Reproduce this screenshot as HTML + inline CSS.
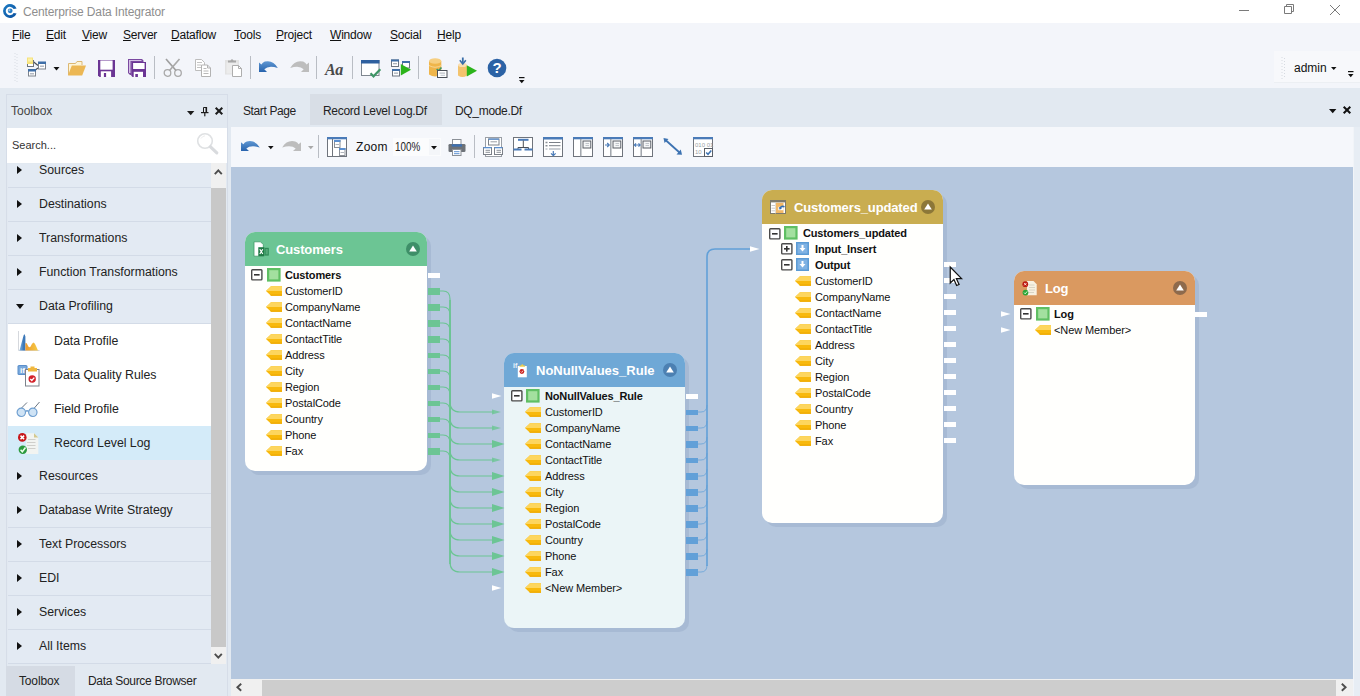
<!DOCTYPE html>
<html>
<head>
<meta charset="utf-8">
<title>Centerprise Data Integrator</title>
<style>
html,body{margin:0;padding:0;}
body{width:1360px;height:696px;overflow:hidden;position:relative;background:#e2e9f1;font-family:"Liberation Sans",sans-serif;font-size:12px;color:#1e1e1e;}
.abs{position:absolute;}
.t{position:absolute;white-space:nowrap;line-height:14px;}
#titlebar{left:0;top:0;width:1360px;height:23px;background:#fff;}
#menubar{left:0;top:23px;width:1360px;height:65px;background:#f3f5fa;}
.menu{top:28px;font-size:12px;color:#111;letter-spacing:-0.2px;}
.menu u{text-decoration:underline;text-underline-offset:1px;}
#toolboxpanel{left:6px;top:94px;width:220px;height:602px;border:1px solid #d6dde8;border-bottom:none;box-sizing:content-box;}
#search{left:7px;top:128px;width:220px;height:35px;background:#fff;}
#tlist{left:8px;top:164px;width:203px;height:500px;background:#e3eaf3;overflow:hidden;}
.cat{position:absolute;left:0;width:203px;height:33px;border-bottom:1px solid #d3dbe7;font-size:12.3px;color:#222;}
.cat span{position:absolute;left:31px;top:9px;line-height:14px;white-space:nowrap;}
.cat i{position:absolute;left:9px;top:12px;width:0;height:0;border-left:5.5px solid #111;border-top:4px solid transparent;border-bottom:4px solid transparent;}
.cat i.open{left:8px;top:14px;border-left:4px solid transparent;border-right:4px solid transparent;border-top:5px solid #111;border-bottom:none;}
.item{position:absolute;left:0;width:203px;height:34px;background:#fff;font-size:12.3px;color:#222;}
.item span{position:absolute;left:46px;top:10px;line-height:14px;white-space:nowrap;}
.item.sel{background:#d4ebf9;}
#vscroll{left:211px;top:163px;width:15px;height:501px;background:#f0f0f0;}
#vthumb{left:211px;top:188px;width:15px;height:459px;background:#c8c8c8;}
#canvas{left:231px;top:167px;width:1122px;height:512px;background:#b5c7de;overflow:hidden;}
#doctb{left:231px;top:127px;width:1122px;height:40px;background:#f5f7fb;}
#hscroll{left:231px;top:679px;width:1122px;height:17px;background:#f0f0f0;}
#hthumb{left:262px;top:680px;width:1074px;height:16px;background:#cdcdcd;}

.node{position:absolute;border-radius:10px;overflow:hidden;box-shadow:4px 4px 0 rgba(125,145,180,0.24);}
.nhdr{position:absolute;left:0;top:0;right:0;height:34px;}
.ntitle{font-size:13px;font-weight:bold;color:#fff;line-height:15px;letter-spacing:-0.13px;}
.f{font-size:11px;line-height:12px;color:#111;letter-spacing:-0.1px;}
.b{font-weight:bold;letter-spacing:-0.15px;}
svg.abs{display:block;overflow:visible;}
.sep{width:1px;background:#b9bdc4;}
</style>
</head>
<body>
<div id="titlebar" class="abs"></div>
<div class="t" style="left:23px;top:5px;font-size:12px;color:#8e8e8e;letter-spacing:-0.13px;">Centerprise Data Integrator</div>
<div id="menubar" class="abs"></div>
<div class="t menu" style="left:12px;"><u>F</u>ile</div>
<div class="t menu" style="left:46px;"><u>E</u>dit</div>
<div class="t menu" style="left:82px;"><u>V</u>iew</div>
<div class="t menu" style="left:123px;"><u>S</u>erver</div>
<div class="t menu" style="left:171px;"><u>D</u>ataflow</div>
<div class="t menu" style="left:234px;"><u>T</u>ools</div>
<div class="t menu" style="left:276px;"><u>P</u>roject</div>
<div class="t menu" style="left:330px;"><u>W</u>indow</div>
<div class="t menu" style="left:390px;"><u>S</u>ocial</div>
<div class="t menu" style="left:437px;"><u>H</u>elp</div>
<div class="abs" style="left:1274px;top:51px;width:86px;height:31px;background:#f7f8fb;border-bottom:1px solid #eceff3;"></div>
<div class="t" style="left:1294px;top:61px;font-size:12px;color:#111;">admin</div>

<!-- TOOLBOX -->
<div id="toolboxpanel" class="abs"></div>
<div class="t" style="left:11px;top:104px;color:#444;">Toolbox</div>
<div id="search" class="abs"></div>
<div class="t" style="left:12px;top:138px;font-size:11px;color:#333;">Search...</div>
<div id="tlist" class="abs">
  <div class="cat" style="top:-10px;"><i></i><span>Sources</span></div>
  <div class="cat" style="top:24px;"><i></i><span>Destinations</span></div>
  <div class="cat" style="top:58px;"><i></i><span>Transformations</span></div>
  <div class="cat" style="top:92px;"><i></i><span>Function Transformations</span></div>
  <div class="cat" style="top:126px;"><i class="open"></i><span>Data Profiling</span></div>
  <div class="item" style="top:160px;"><span>Data Profile</span></div>
  <div class="item" style="top:194px;"><span>Data Quality Rules</span></div>
  <div class="item" style="top:228px;"><span>Field Profile</span></div>
  <div class="item sel" style="top:262px;"><span>Record Level Log</span></div>
  <div class="cat" style="top:296px;"><i></i><span>Resources</span></div>
  <div class="cat" style="top:330px;"><i></i><span>Database Write Strategy</span></div>
  <div class="cat" style="top:364px;"><i></i><span>Text Processors</span></div>
  <div class="cat" style="top:398px;"><i></i><span>EDI</span></div>
  <div class="cat" style="top:432px;"><i></i><span>Services</span></div>
  <div class="cat" style="top:466px;"><i></i><span>All Items</span></div>
</div>
<div id="vscroll" class="abs"></div>
<div id="vthumb" class="abs"></div>
<div class="abs" style="left:6px;top:666px;width:69px;height:30px;background:#d5dbe4;"></div>
<div class="t" style="left:19px;top:674px;color:#222;letter-spacing:-0.15px;">Toolbox</div>
<div class="t" style="left:88px;top:674px;color:#222;letter-spacing:-0.3px;">Data Source Browser</div>

<!-- DOC TABS -->
<div class="abs" style="left:310px;top:94px;width:132px;height:31px;background:#d8dee6;"></div>
<div class="t" style="left:243px;top:104px;color:#222;letter-spacing:-0.38px;">Start Page</div>
<div class="t" style="left:323px;top:104px;color:#222;letter-spacing:-0.3px;">Record Level Log.Df</div>
<div class="t" style="left:455px;top:104px;color:#222;letter-spacing:-0.32px;">DQ_mode.Df</div>
<div id="doctb" class="abs"></div>
<div id="canvas" class="abs"></div>
<div id="hscroll" class="abs"></div>
<div class="abs" style="left:1353px;top:127px;width:7px;height:569px;background:#e7edf4;border-left:1px solid #f1f4f8;box-sizing:border-box;"></div>
<div id="hthumb" class="abs"></div>
<svg class="abs" style="left:0;top:0" width="1360" height="696" viewBox="0 0 1360 696" fill="none"><path d="M440 291 H443 Q450 291 450 299 V402 Q450 412 460 412 H494" stroke="#6cc594" stroke-width="1.2"/><path d="M440 307 H443 Q450 307 450 315 V418 Q450 428 460 428 H494" stroke="#6cc594" stroke-width="1.2"/><path d="M440 323 H443 Q450 323 450 331 V434 Q450 444 460 444 H494" stroke="#6cc594" stroke-width="1.2"/><path d="M440 339 H443 Q450 339 450 347 V450 Q450 460 460 460 H494" stroke="#6cc594" stroke-width="1.2"/><path d="M440 355 H443 Q450 355 450 363 V466 Q450 476 460 476 H494" stroke="#6cc594" stroke-width="1.2"/><path d="M440 371 H443 Q450 371 450 379 V482 Q450 492 460 492 H494" stroke="#6cc594" stroke-width="1.2"/><path d="M440 387 H443 Q450 387 450 395 V498 Q450 508 460 508 H494" stroke="#6cc594" stroke-width="1.2"/><path d="M440 403 H443 Q450 403 450 411 V514 Q450 524 460 524 H494" stroke="#6cc594" stroke-width="1.2"/><path d="M440 419 H443 Q450 419 450 427 V530 Q450 540 460 540 H494" stroke="#6cc594" stroke-width="1.2"/><path d="M440 435 H443 Q450 435 450 443 V546 Q450 556 460 556 H494" stroke="#6cc594" stroke-width="1.2"/><path d="M440 451 H443 Q450 451 450 459 V562 Q450 572 460 572 H494" stroke="#6cc594" stroke-width="1.2"/><path d="M697 412 H701 Q707 412 707 405" stroke="#62a0d8" stroke-width="1" opacity="0.75"/><path d="M697 428 H701 Q707 428 707 421" stroke="#62a0d8" stroke-width="1" opacity="0.75"/><path d="M697 444 H701 Q707 444 707 437" stroke="#62a0d8" stroke-width="1" opacity="0.75"/><path d="M697 460 H701 Q707 460 707 453" stroke="#62a0d8" stroke-width="1" opacity="0.75"/><path d="M697 476 H701 Q707 476 707 469" stroke="#62a0d8" stroke-width="1" opacity="0.75"/><path d="M697 492 H701 Q707 492 707 485" stroke="#62a0d8" stroke-width="1" opacity="0.75"/><path d="M697 508 H701 Q707 508 707 501" stroke="#62a0d8" stroke-width="1" opacity="0.75"/><path d="M697 524 H701 Q707 524 707 517" stroke="#62a0d8" stroke-width="1" opacity="0.75"/><path d="M697 540 H701 Q707 540 707 533" stroke="#62a0d8" stroke-width="1" opacity="0.75"/><path d="M697 556 H701 Q707 556 707 549" stroke="#62a0d8" stroke-width="1" opacity="0.75"/><path d="M697 572 H701 Q707 572 707 565" stroke="#62a0d8" stroke-width="1" opacity="0.75"/><path d="M450 300 V564" stroke="#6cc594" stroke-width="1.6"/><path d="M707 566 V257 Q707 249 715 249 H751" stroke="#62a0d8" stroke-width="1.6"/></svg>
<div class="node" style="left:245px;top:232px;width:182px;height:239px;background:#fffffd;"><div class="nhdr" style="background:#6cc594;"></div></div><div class="t ntitle" style="left:276px;top:242px;">Customers</div><svg class="abs" style="left:406px;top:242px" width="14" height="14" viewBox="0 0 14 14"><circle cx="7" cy="7" r="7" fill="#3e8f68"/><path d="M3.2 9.6 L7 3.6 L10.8 9.6 Z" fill="#fff"/></svg>
<svg class="abs" style="left:251px;top:269px" width="12" height="12" viewBox="0 0 12 12"><rect x="0.7" y="0.7" width="10.2" height="10.2" rx="0.8" fill="#fff" stroke="#4a4a4a" stroke-width="1.4"/><rect x="3" y="5" width="5.6" height="1.6" fill="#333"/></svg>
<svg class="abs" style="left:267px;top:268px" width="14" height="14" viewBox="0 0 14 14"><rect x="0" y="0" width="13.6" height="13.6" fill="#5fbf63"/><rect x="2.2" y="2.2" width="9.2" height="9.2" fill="#a3e09f"/></svg>
<div class="t f b" style="left:285px;top:269px;">Customers</div>
<svg class="abs" style="left:266px;top:286px" width="16" height="10" viewBox="0 0 16 10"><path d="M0 5 L5 0.3 H16 V9.7 H5 Z" fill="#f8b90d"/><path d="M0 5 L5 0.3 H16 V5 Z" fill="#fdd65e"/><path d="M4 8.4 H16 V9.7 H5 Z" fill="#eea900"/></svg>
<div class="t f" style="left:285px;top:285px;">CustomerID</div>
<svg class="abs" style="left:266px;top:302px" width="16" height="10" viewBox="0 0 16 10"><path d="M0 5 L5 0.3 H16 V9.7 H5 Z" fill="#f8b90d"/><path d="M0 5 L5 0.3 H16 V5 Z" fill="#fdd65e"/><path d="M4 8.4 H16 V9.7 H5 Z" fill="#eea900"/></svg>
<div class="t f" style="left:285px;top:301px;">CompanyName</div>
<svg class="abs" style="left:266px;top:318px" width="16" height="10" viewBox="0 0 16 10"><path d="M0 5 L5 0.3 H16 V9.7 H5 Z" fill="#f8b90d"/><path d="M0 5 L5 0.3 H16 V5 Z" fill="#fdd65e"/><path d="M4 8.4 H16 V9.7 H5 Z" fill="#eea900"/></svg>
<div class="t f" style="left:285px;top:317px;">ContactName</div>
<svg class="abs" style="left:266px;top:334px" width="16" height="10" viewBox="0 0 16 10"><path d="M0 5 L5 0.3 H16 V9.7 H5 Z" fill="#f8b90d"/><path d="M0 5 L5 0.3 H16 V5 Z" fill="#fdd65e"/><path d="M4 8.4 H16 V9.7 H5 Z" fill="#eea900"/></svg>
<div class="t f" style="left:285px;top:333px;">ContactTitle</div>
<svg class="abs" style="left:266px;top:350px" width="16" height="10" viewBox="0 0 16 10"><path d="M0 5 L5 0.3 H16 V9.7 H5 Z" fill="#f8b90d"/><path d="M0 5 L5 0.3 H16 V5 Z" fill="#fdd65e"/><path d="M4 8.4 H16 V9.7 H5 Z" fill="#eea900"/></svg>
<div class="t f" style="left:285px;top:349px;">Address</div>
<svg class="abs" style="left:266px;top:366px" width="16" height="10" viewBox="0 0 16 10"><path d="M0 5 L5 0.3 H16 V9.7 H5 Z" fill="#f8b90d"/><path d="M0 5 L5 0.3 H16 V5 Z" fill="#fdd65e"/><path d="M4 8.4 H16 V9.7 H5 Z" fill="#eea900"/></svg>
<div class="t f" style="left:285px;top:365px;">City</div>
<svg class="abs" style="left:266px;top:382px" width="16" height="10" viewBox="0 0 16 10"><path d="M0 5 L5 0.3 H16 V9.7 H5 Z" fill="#f8b90d"/><path d="M0 5 L5 0.3 H16 V5 Z" fill="#fdd65e"/><path d="M4 8.4 H16 V9.7 H5 Z" fill="#eea900"/></svg>
<div class="t f" style="left:285px;top:381px;">Region</div>
<svg class="abs" style="left:266px;top:398px" width="16" height="10" viewBox="0 0 16 10"><path d="M0 5 L5 0.3 H16 V9.7 H5 Z" fill="#f8b90d"/><path d="M0 5 L5 0.3 H16 V5 Z" fill="#fdd65e"/><path d="M4 8.4 H16 V9.7 H5 Z" fill="#eea900"/></svg>
<div class="t f" style="left:285px;top:397px;">PostalCode</div>
<svg class="abs" style="left:266px;top:414px" width="16" height="10" viewBox="0 0 16 10"><path d="M0 5 L5 0.3 H16 V9.7 H5 Z" fill="#f8b90d"/><path d="M0 5 L5 0.3 H16 V5 Z" fill="#fdd65e"/><path d="M4 8.4 H16 V9.7 H5 Z" fill="#eea900"/></svg>
<div class="t f" style="left:285px;top:413px;">Country</div>
<svg class="abs" style="left:266px;top:430px" width="16" height="10" viewBox="0 0 16 10"><path d="M0 5 L5 0.3 H16 V9.7 H5 Z" fill="#f8b90d"/><path d="M0 5 L5 0.3 H16 V5 Z" fill="#fdd65e"/><path d="M4 8.4 H16 V9.7 H5 Z" fill="#eea900"/></svg>
<div class="t f" style="left:285px;top:429px;">Phone</div>
<svg class="abs" style="left:266px;top:446px" width="16" height="10" viewBox="0 0 16 10"><path d="M0 5 L5 0.3 H16 V9.7 H5 Z" fill="#f8b90d"/><path d="M0 5 L5 0.3 H16 V5 Z" fill="#fdd65e"/><path d="M4 8.4 H16 V9.7 H5 Z" fill="#eea900"/></svg>
<div class="t f" style="left:285px;top:445px;">Fax</div>
<div class="abs" style="left:428px;top:272.5px;width:12px;height:5px;background:#ffffff;"></div>
<div class="abs" style="left:428px;top:287.5px;width:12px;height:7px;background:#6cc594;"></div>
<div class="abs" style="left:428px;top:303.5px;width:12px;height:7px;background:#6cc594;"></div>
<div class="abs" style="left:428px;top:319.5px;width:12px;height:7px;background:#6cc594;"></div>
<div class="abs" style="left:428px;top:335.5px;width:12px;height:7px;background:#6cc594;"></div>
<div class="abs" style="left:428px;top:352.5px;width:12px;height:5px;background:#6cc594;"></div>
<div class="abs" style="left:428px;top:368.5px;width:12px;height:5px;background:#6cc594;"></div>
<div class="abs" style="left:428px;top:384.5px;width:12px;height:5px;background:#6cc594;"></div>
<div class="abs" style="left:428px;top:400.5px;width:12px;height:5px;background:#6cc594;"></div>
<div class="abs" style="left:428px;top:416.5px;width:12px;height:5px;background:#6cc594;"></div>
<div class="abs" style="left:428px;top:432.5px;width:12px;height:5px;background:#6cc594;"></div>
<div class="abs" style="left:428px;top:447.5px;width:12px;height:7px;background:#6cc594;"></div>
<div class="node" style="left:504px;top:353px;width:181px;height:275px;background:#ebf5f7;"><div class="nhdr" style="background:#6fa8d6;"></div></div><div class="t ntitle" style="left:536px;top:363px;letter-spacing:0;">NoNullValues_Rule</div><svg class="abs" style="left:663px;top:363px" width="14" height="14" viewBox="0 0 14 14"><circle cx="7" cy="7" r="7" fill="#4c80b2"/><path d="M3.2 9.6 L7 3.6 L10.8 9.6 Z" fill="#fff"/></svg>
<svg class="abs" style="left:511px;top:390px" width="12" height="12" viewBox="0 0 12 12"><rect x="0.7" y="0.7" width="10.2" height="10.2" rx="0.8" fill="#fff" stroke="#4a4a4a" stroke-width="1.4"/><rect x="3" y="5" width="5.6" height="1.6" fill="#333"/></svg>
<svg class="abs" style="left:526px;top:389px" width="14" height="14" viewBox="0 0 14 14"><rect x="0" y="0" width="13.6" height="13.6" fill="#5fbf63"/><rect x="2.2" y="2.2" width="9.2" height="9.2" fill="#a3e09f"/></svg>
<div class="t f b" style="left:545px;top:390px;">NoNullValues_Rule</div>
<svg class="abs" style="left:525px;top:407px" width="16" height="10" viewBox="0 0 16 10"><path d="M0 5 L5 0.3 H16 V9.7 H5 Z" fill="#f8b90d"/><path d="M0 5 L5 0.3 H16 V5 Z" fill="#fdd65e"/><path d="M4 8.4 H16 V9.7 H5 Z" fill="#eea900"/></svg>
<div class="t f" style="left:545px;top:406px;">CustomerID</div>
<svg class="abs" style="left:525px;top:423px" width="16" height="10" viewBox="0 0 16 10"><path d="M0 5 L5 0.3 H16 V9.7 H5 Z" fill="#f8b90d"/><path d="M0 5 L5 0.3 H16 V5 Z" fill="#fdd65e"/><path d="M4 8.4 H16 V9.7 H5 Z" fill="#eea900"/></svg>
<div class="t f" style="left:545px;top:422px;">CompanyName</div>
<svg class="abs" style="left:525px;top:439px" width="16" height="10" viewBox="0 0 16 10"><path d="M0 5 L5 0.3 H16 V9.7 H5 Z" fill="#f8b90d"/><path d="M0 5 L5 0.3 H16 V5 Z" fill="#fdd65e"/><path d="M4 8.4 H16 V9.7 H5 Z" fill="#eea900"/></svg>
<div class="t f" style="left:545px;top:438px;">ContactName</div>
<svg class="abs" style="left:525px;top:455px" width="16" height="10" viewBox="0 0 16 10"><path d="M0 5 L5 0.3 H16 V9.7 H5 Z" fill="#f8b90d"/><path d="M0 5 L5 0.3 H16 V5 Z" fill="#fdd65e"/><path d="M4 8.4 H16 V9.7 H5 Z" fill="#eea900"/></svg>
<div class="t f" style="left:545px;top:454px;">ContactTitle</div>
<svg class="abs" style="left:525px;top:471px" width="16" height="10" viewBox="0 0 16 10"><path d="M0 5 L5 0.3 H16 V9.7 H5 Z" fill="#f8b90d"/><path d="M0 5 L5 0.3 H16 V5 Z" fill="#fdd65e"/><path d="M4 8.4 H16 V9.7 H5 Z" fill="#eea900"/></svg>
<div class="t f" style="left:545px;top:470px;">Address</div>
<svg class="abs" style="left:525px;top:487px" width="16" height="10" viewBox="0 0 16 10"><path d="M0 5 L5 0.3 H16 V9.7 H5 Z" fill="#f8b90d"/><path d="M0 5 L5 0.3 H16 V5 Z" fill="#fdd65e"/><path d="M4 8.4 H16 V9.7 H5 Z" fill="#eea900"/></svg>
<div class="t f" style="left:545px;top:486px;">City</div>
<svg class="abs" style="left:525px;top:503px" width="16" height="10" viewBox="0 0 16 10"><path d="M0 5 L5 0.3 H16 V9.7 H5 Z" fill="#f8b90d"/><path d="M0 5 L5 0.3 H16 V5 Z" fill="#fdd65e"/><path d="M4 8.4 H16 V9.7 H5 Z" fill="#eea900"/></svg>
<div class="t f" style="left:545px;top:502px;">Region</div>
<svg class="abs" style="left:525px;top:519px" width="16" height="10" viewBox="0 0 16 10"><path d="M0 5 L5 0.3 H16 V9.7 H5 Z" fill="#f8b90d"/><path d="M0 5 L5 0.3 H16 V5 Z" fill="#fdd65e"/><path d="M4 8.4 H16 V9.7 H5 Z" fill="#eea900"/></svg>
<div class="t f" style="left:545px;top:518px;">PostalCode</div>
<svg class="abs" style="left:525px;top:535px" width="16" height="10" viewBox="0 0 16 10"><path d="M0 5 L5 0.3 H16 V9.7 H5 Z" fill="#f8b90d"/><path d="M0 5 L5 0.3 H16 V5 Z" fill="#fdd65e"/><path d="M4 8.4 H16 V9.7 H5 Z" fill="#eea900"/></svg>
<div class="t f" style="left:545px;top:534px;">Country</div>
<svg class="abs" style="left:525px;top:551px" width="16" height="10" viewBox="0 0 16 10"><path d="M0 5 L5 0.3 H16 V9.7 H5 Z" fill="#f8b90d"/><path d="M0 5 L5 0.3 H16 V5 Z" fill="#fdd65e"/><path d="M4 8.4 H16 V9.7 H5 Z" fill="#eea900"/></svg>
<div class="t f" style="left:545px;top:550px;">Phone</div>
<svg class="abs" style="left:525px;top:567px" width="16" height="10" viewBox="0 0 16 10"><path d="M0 5 L5 0.3 H16 V9.7 H5 Z" fill="#f8b90d"/><path d="M0 5 L5 0.3 H16 V5 Z" fill="#fdd65e"/><path d="M4 8.4 H16 V9.7 H5 Z" fill="#eea900"/></svg>
<div class="t f" style="left:545px;top:566px;">Fax</div>
<svg class="abs" style="left:525px;top:583px" width="16" height="10" viewBox="0 0 16 10"><path d="M0 5 L5 0.3 H16 V9.7 H5 Z" fill="#f8b90d"/><path d="M0 5 L5 0.3 H16 V5 Z" fill="#fdd65e"/><path d="M4 8.4 H16 V9.7 H5 Z" fill="#eea900"/></svg>
<div class="t f" style="left:545px;top:582px;">&lt;New Member&gt;</div>
<svg class="abs" style="left:492px;top:391px" width="14" height="10" viewBox="0 0 14 10"><path d="M0 2.3 L9.5 5 L0 7.7 Z" fill="#ffffff" opacity="1"/></svg>
<svg class="abs" style="left:492px;top:407px" width="14" height="10" viewBox="0 0 14 10"><path d="M0 2.5 L9 5 L0 7.5 Z" fill="#6cc594" opacity="0.8"/></svg>
<svg class="abs" style="left:492px;top:423px" width="14" height="10" viewBox="0 0 14 10"><path d="M0 2.5 L9 5 L0 7.5 Z" fill="#6cc594" opacity="0.8"/></svg>
<svg class="abs" style="left:491.5px;top:439px" width="14" height="10" viewBox="0 0 14 10"><path d="M0 1 L12.5 5 L0 9 Z" fill="#6cc594" opacity="1"/></svg>
<svg class="abs" style="left:492px;top:455px" width="14" height="10" viewBox="0 0 14 10"><path d="M0 2.5 L9 5 L0 7.5 Z" fill="#6cc594" opacity="0.8"/></svg>
<svg class="abs" style="left:491.5px;top:471px" width="14" height="10" viewBox="0 0 14 10"><path d="M0 1 L12.5 5 L0 9 Z" fill="#6cc594" opacity="1"/></svg>
<svg class="abs" style="left:491.5px;top:487px" width="14" height="10" viewBox="0 0 14 10"><path d="M0 1 L12.5 5 L0 9 Z" fill="#6cc594" opacity="1"/></svg>
<svg class="abs" style="left:491.5px;top:503px" width="14" height="10" viewBox="0 0 14 10"><path d="M0 1 L12.5 5 L0 9 Z" fill="#6cc594" opacity="1"/></svg>
<svg class="abs" style="left:491.5px;top:519px" width="14" height="10" viewBox="0 0 14 10"><path d="M0 1 L12.5 5 L0 9 Z" fill="#6cc594" opacity="1"/></svg>
<svg class="abs" style="left:491.5px;top:535px" width="14" height="10" viewBox="0 0 14 10"><path d="M0 1 L12.5 5 L0 9 Z" fill="#6cc594" opacity="1"/></svg>
<svg class="abs" style="left:491.5px;top:551px" width="14" height="10" viewBox="0 0 14 10"><path d="M0 1 L12.5 5 L0 9 Z" fill="#6cc594" opacity="1"/></svg>
<svg class="abs" style="left:491.5px;top:567px" width="14" height="10" viewBox="0 0 14 10"><path d="M0 1 L12.5 5 L0 9 Z" fill="#6cc594" opacity="1"/></svg>
<svg class="abs" style="left:492px;top:583px" width="14" height="10" viewBox="0 0 14 10"><path d="M0 2.3 L9.5 5 L0 7.7 Z" fill="#ffffff" opacity="1"/></svg>
<div class="abs" style="left:686px;top:393.5px;width:12px;height:5px;background:#ffffff;"></div>
<div class="abs" style="left:686px;top:409.5px;width:12px;height:5px;background:#62a0d8;"></div>
<div class="abs" style="left:686px;top:425.5px;width:12px;height:5px;background:#62a0d8;"></div>
<div class="abs" style="left:686px;top:440.5px;width:12px;height:7px;background:#62a0d8;"></div>
<div class="abs" style="left:686px;top:457.5px;width:12px;height:5px;background:#62a0d8;"></div>
<div class="abs" style="left:686px;top:472.5px;width:12px;height:7px;background:#62a0d8;"></div>
<div class="abs" style="left:686px;top:488.5px;width:12px;height:7px;background:#62a0d8;"></div>
<div class="abs" style="left:686px;top:504.5px;width:12px;height:7px;background:#62a0d8;"></div>
<div class="abs" style="left:686px;top:520.5px;width:12px;height:7px;background:#62a0d8;"></div>
<div class="abs" style="left:686px;top:536.5px;width:12px;height:7px;background:#62a0d8;"></div>
<div class="abs" style="left:686px;top:552.5px;width:12px;height:7px;background:#62a0d8;"></div>
<div class="abs" style="left:686px;top:568.5px;width:12px;height:7px;background:#62a0d8;"></div>
<div class="node" style="left:762px;top:190px;width:181px;height:333px;background:#fffffd;"><div class="nhdr" style="background:#c9ad50;"></div></div><div class="t ntitle" style="left:794px;top:200px;">Customers_updated</div><svg class="abs" style="left:921px;top:200px" width="14" height="14" viewBox="0 0 14 14"><circle cx="7" cy="7" r="7" fill="#8c7738"/><path d="M3.2 9.6 L7 3.6 L10.8 9.6 Z" fill="#fff"/></svg>
<svg class="abs" style="left:769px;top:228px" width="12" height="12" viewBox="0 0 12 12"><rect x="0.7" y="0.7" width="10.2" height="10.2" rx="0.8" fill="#fff" stroke="#4a4a4a" stroke-width="1.4"/><rect x="3" y="5" width="5.6" height="1.6" fill="#333"/></svg>
<svg class="abs" style="left:784px;top:226px" width="14" height="14" viewBox="0 0 14 14"><rect x="0" y="0" width="13.6" height="13.6" fill="#5fbf63"/><rect x="2.2" y="2.2" width="9.2" height="9.2" fill="#a3e09f"/></svg>
<div class="t f b" style="left:803px;top:227px;">Customers_updated</div>
<svg class="abs" style="left:781px;top:243px" width="12" height="12" viewBox="0 0 12 12"><rect x="0.7" y="0.7" width="10.2" height="10.2" rx="0.8" fill="#fff" stroke="#4a4a4a" stroke-width="1.4"/><rect x="3" y="5" width="5.6" height="1.6" fill="#333"/><rect x="5" y="3" width="1.6" height="5.6" fill="#333"/></svg>
<svg class="abs" style="left:796px;top:242px" width="13" height="13" viewBox="0 0 13 13"><rect x="0" y="0" width="13" height="13" fill="#5b9bd5"/><rect x="1.5" y="1.5" width="10" height="10" fill="#7fb2e3"/><path d="M5.5 3 H7.5 V6 H9.5 L6.5 9.5 L3.5 6 H5.5 Z" fill="#fff"/></svg>
<div class="t f b" style="left:815px;top:243px;">Input_Insert</div>
<svg class="abs" style="left:781px;top:259px" width="12" height="12" viewBox="0 0 12 12"><rect x="0.7" y="0.7" width="10.2" height="10.2" rx="0.8" fill="#fff" stroke="#4a4a4a" stroke-width="1.4"/><rect x="3" y="5" width="5.6" height="1.6" fill="#333"/></svg>
<svg class="abs" style="left:796px;top:258px" width="13" height="13" viewBox="0 0 13 13"><rect x="0" y="0" width="13" height="13" fill="#5b9bd5"/><rect x="1.5" y="1.5" width="10" height="10" fill="#7fb2e3"/><path d="M5.5 3 H7.5 V6 H9.5 L6.5 9.5 L3.5 6 H5.5 Z" fill="#fff"/></svg>
<div class="t f b" style="left:815px;top:259px;">Output</div>
<svg class="abs" style="left:795px;top:276px" width="16" height="10" viewBox="0 0 16 10"><path d="M0 5 L5 0.3 H16 V9.7 H5 Z" fill="#f8b90d"/><path d="M0 5 L5 0.3 H16 V5 Z" fill="#fdd65e"/><path d="M4 8.4 H16 V9.7 H5 Z" fill="#eea900"/></svg>
<div class="t f" style="left:815px;top:275px;">CustomerID</div>
<svg class="abs" style="left:795px;top:292px" width="16" height="10" viewBox="0 0 16 10"><path d="M0 5 L5 0.3 H16 V9.7 H5 Z" fill="#f8b90d"/><path d="M0 5 L5 0.3 H16 V5 Z" fill="#fdd65e"/><path d="M4 8.4 H16 V9.7 H5 Z" fill="#eea900"/></svg>
<div class="t f" style="left:815px;top:291px;">CompanyName</div>
<svg class="abs" style="left:795px;top:308px" width="16" height="10" viewBox="0 0 16 10"><path d="M0 5 L5 0.3 H16 V9.7 H5 Z" fill="#f8b90d"/><path d="M0 5 L5 0.3 H16 V5 Z" fill="#fdd65e"/><path d="M4 8.4 H16 V9.7 H5 Z" fill="#eea900"/></svg>
<div class="t f" style="left:815px;top:307px;">ContactName</div>
<svg class="abs" style="left:795px;top:324px" width="16" height="10" viewBox="0 0 16 10"><path d="M0 5 L5 0.3 H16 V9.7 H5 Z" fill="#f8b90d"/><path d="M0 5 L5 0.3 H16 V5 Z" fill="#fdd65e"/><path d="M4 8.4 H16 V9.7 H5 Z" fill="#eea900"/></svg>
<div class="t f" style="left:815px;top:323px;">ContactTitle</div>
<svg class="abs" style="left:795px;top:340px" width="16" height="10" viewBox="0 0 16 10"><path d="M0 5 L5 0.3 H16 V9.7 H5 Z" fill="#f8b90d"/><path d="M0 5 L5 0.3 H16 V5 Z" fill="#fdd65e"/><path d="M4 8.4 H16 V9.7 H5 Z" fill="#eea900"/></svg>
<div class="t f" style="left:815px;top:339px;">Address</div>
<svg class="abs" style="left:795px;top:356px" width="16" height="10" viewBox="0 0 16 10"><path d="M0 5 L5 0.3 H16 V9.7 H5 Z" fill="#f8b90d"/><path d="M0 5 L5 0.3 H16 V5 Z" fill="#fdd65e"/><path d="M4 8.4 H16 V9.7 H5 Z" fill="#eea900"/></svg>
<div class="t f" style="left:815px;top:355px;">City</div>
<svg class="abs" style="left:795px;top:372px" width="16" height="10" viewBox="0 0 16 10"><path d="M0 5 L5 0.3 H16 V9.7 H5 Z" fill="#f8b90d"/><path d="M0 5 L5 0.3 H16 V5 Z" fill="#fdd65e"/><path d="M4 8.4 H16 V9.7 H5 Z" fill="#eea900"/></svg>
<div class="t f" style="left:815px;top:371px;">Region</div>
<svg class="abs" style="left:795px;top:388px" width="16" height="10" viewBox="0 0 16 10"><path d="M0 5 L5 0.3 H16 V9.7 H5 Z" fill="#f8b90d"/><path d="M0 5 L5 0.3 H16 V5 Z" fill="#fdd65e"/><path d="M4 8.4 H16 V9.7 H5 Z" fill="#eea900"/></svg>
<div class="t f" style="left:815px;top:387px;">PostalCode</div>
<svg class="abs" style="left:795px;top:404px" width="16" height="10" viewBox="0 0 16 10"><path d="M0 5 L5 0.3 H16 V9.7 H5 Z" fill="#f8b90d"/><path d="M0 5 L5 0.3 H16 V5 Z" fill="#fdd65e"/><path d="M4 8.4 H16 V9.7 H5 Z" fill="#eea900"/></svg>
<div class="t f" style="left:815px;top:403px;">Country</div>
<svg class="abs" style="left:795px;top:420px" width="16" height="10" viewBox="0 0 16 10"><path d="M0 5 L5 0.3 H16 V9.7 H5 Z" fill="#f8b90d"/><path d="M0 5 L5 0.3 H16 V5 Z" fill="#fdd65e"/><path d="M4 8.4 H16 V9.7 H5 Z" fill="#eea900"/></svg>
<div class="t f" style="left:815px;top:419px;">Phone</div>
<svg class="abs" style="left:795px;top:436px" width="16" height="10" viewBox="0 0 16 10"><path d="M0 5 L5 0.3 H16 V9.7 H5 Z" fill="#f8b90d"/><path d="M0 5 L5 0.3 H16 V5 Z" fill="#fdd65e"/><path d="M4 8.4 H16 V9.7 H5 Z" fill="#eea900"/></svg>
<div class="t f" style="left:815px;top:435px;">Fax</div>
<svg class="abs" style="left:750px;top:244px" width="14" height="10" viewBox="0 0 14 10"><path d="M0 2.3 L9.5 5 L0 7.7 Z" fill="#ffffff" opacity="1"/></svg>
<div class="abs" style="left:944px;top:262.0px;width:12px;height:5px;background:#ffffff;"></div>
<div class="abs" style="left:944px;top:278.0px;width:12px;height:5px;background:#ffffff;"></div>
<div class="abs" style="left:944px;top:294.0px;width:12px;height:5px;background:#ffffff;"></div>
<div class="abs" style="left:944px;top:310.0px;width:12px;height:5px;background:#ffffff;"></div>
<div class="abs" style="left:944px;top:326.0px;width:12px;height:5px;background:#ffffff;"></div>
<div class="abs" style="left:944px;top:342.0px;width:12px;height:5px;background:#ffffff;"></div>
<div class="abs" style="left:944px;top:358.0px;width:12px;height:5px;background:#ffffff;"></div>
<div class="abs" style="left:944px;top:374.0px;width:12px;height:5px;background:#ffffff;"></div>
<div class="abs" style="left:944px;top:390.0px;width:12px;height:5px;background:#ffffff;"></div>
<div class="abs" style="left:944px;top:406.0px;width:12px;height:5px;background:#ffffff;"></div>
<div class="abs" style="left:944px;top:422.0px;width:12px;height:5px;background:#ffffff;"></div>
<div class="abs" style="left:944px;top:438.0px;width:12px;height:5px;background:#ffffff;"></div>
<div class="node" style="left:1014px;top:271px;width:181px;height:214px;background:#fffffd;"><div class="nhdr" style="background:#da9960;"></div></div><div class="t ntitle" style="left:1045px;top:281px;">Log</div><svg class="abs" style="left:1173px;top:281px" width="14" height="14" viewBox="0 0 14 14"><circle cx="7" cy="7" r="7" fill="#8e6a4c"/><path d="M3.2 9.6 L7 3.6 L10.8 9.6 Z" fill="#fff"/></svg>
<svg class="abs" style="left:1020px;top:308px" width="12" height="12" viewBox="0 0 12 12"><rect x="0.7" y="0.7" width="10.2" height="10.2" rx="0.8" fill="#fff" stroke="#4a4a4a" stroke-width="1.4"/><rect x="3" y="5" width="5.6" height="1.6" fill="#333"/></svg>
<svg class="abs" style="left:1036px;top:307px" width="14" height="14" viewBox="0 0 14 14"><rect x="0" y="0" width="13.6" height="13.6" fill="#5fbf63"/><rect x="2.2" y="2.2" width="9.2" height="9.2" fill="#a3e09f"/></svg>
<div class="t f b" style="left:1054px;top:308px;">Log</div>
<svg class="abs" style="left:1035px;top:325px" width="16" height="10" viewBox="0 0 16 10"><path d="M0 5 L5 0.3 H16 V9.7 H5 Z" fill="#f8b90d"/><path d="M0 5 L5 0.3 H16 V5 Z" fill="#fdd65e"/><path d="M4 8.4 H16 V9.7 H5 Z" fill="#eea900"/></svg>
<div class="t f" style="left:1054px;top:324px;">&lt;New Member&gt;</div>
<svg class="abs" style="left:1001px;top:309px" width="14" height="10" viewBox="0 0 14 10"><path d="M0 2.3 L9.5 5 L0 7.7 Z" fill="#ffffff" opacity="1"/></svg>
<svg class="abs" style="left:1001px;top:325px" width="14" height="10" viewBox="0 0 14 10"><path d="M0 2.3 L9.5 5 L0 7.7 Z" fill="#ffffff" opacity="1"/></svg>
<div class="abs" style="left:1195px;top:311.5px;width:12px;height:5px;background:#ffffff;"></div>
<svg class="abs" style="left:949.3px;top:266.2px" width="13.8" height="20.6" viewBox="0 0 13 20"><path d="M1 1 V16.5 L4.6 13.2 L7.2 19 L9.6 18 L7 12.3 H12 Z" fill="#fff" stroke="#111" stroke-width="1.2" stroke-linejoin="miter"/></svg>
<!-- logo -->
<svg class="abs" style="left:2px;top:3px" width="16" height="16" viewBox="0 0 16 16">
<defs><linearGradient id="lg1" x1="0" y1="0" x2="1" y2="1"><stop offset="0" stop-color="#1d7cc4"/><stop offset="1" stop-color="#0a4f9e"/></linearGradient></defs>
<path d="M14.6 5.6 A7 7 0 1 0 14.6 10.4 L11.6 10 A4.2 4.2 0 1 1 11.6 6 Z" fill="url(#lg1)"/>
<circle cx="8.2" cy="7.8" r="2.4" fill="#2a7fc6"/><circle cx="7.4" cy="7.2" r="1" fill="#9cc8ea"/>
</svg>
<!-- window controls -->
<svg class="abs" style="left:1236px;top:0" width="124" height="23" viewBox="0 0 124 23" fill="none" stroke="#7a7a7a" stroke-width="1">
<path d="M3 10.5 H13"/>
<path d="M48.500 6.500 H55.500 V13.500 H48.500 Z M50.500 6.500 V4.500 H57.500 V11.500 H55.500"/>
<path d="M94 5 L104 15 M104 5 L94 15"/>
</svg>
<!-- main toolbar grip -->
<svg class="abs" style="left:14px;top:53px" width="4" height="30" viewBox="0 0 4 30"><path d="M1 0 V30 M3 1 V30" stroke="#d9dde4" stroke-width="1" stroke-dasharray="1 2"/></svg>
<svg class="abs" style="left:1281px;top:57px" width="5" height="22" viewBox="0 0 5 22"><path d="M1 0 V22 M3.500 1 V22" stroke="#d6dae1" stroke-width="1" stroke-dasharray="1 2"/></svg>
<!-- 1 new dataflow -->
<svg class="abs" style="left:26px;top:56px" width="21" height="21" viewBox="0 0 21 21">
<path d="M6.500 5 L12 9.500 M8 15 L12 12" stroke="#4a4f57" stroke-width="1.2" fill="none"/>
<rect x="1.500" y="4.500" width="6" height="6" fill="#fff" stroke="#6d737c"/>
<path d="M1 1.500 H7 V8 H1 Z" fill="#f6e27a"/><path d="M2 2.500 h4 v3 h-4z" fill="#fbf0a8"/>
<rect x="12.500" y="6.500" width="7" height="6.500" fill="#fff" stroke="#7d838c"/>
<rect x="12" y="5.500" width="8" height="2.500" fill="#3f6fa8"/>
<rect x="14" y="9.500" width="4" height="1.500" fill="#b4b9c2"/>
<rect x="2.500" y="14" width="7" height="6" fill="#fff" stroke="#7d838c"/>
<rect x="2" y="13" width="8" height="2.500" fill="#3f6fa8"/>
<rect x="4" y="17" width="4" height="1.500" fill="#b4b9c2"/>
</svg>
<svg class="abs" style="left:53px;top:67px" width="7" height="4" viewBox="0 0 7 4"><path d="M0.500 0 H6.500 L3.500 3.500 Z" fill="#111"/></svg>
<!-- 2 folder -->
<svg class="abs" style="left:67px;top:60px" width="20" height="17" viewBox="0 0 20 17">
<path d="M1.500 15 V3.500 H8.500 L10 1.500 H15 V5" fill="#fdf4d8" stroke="#dcb873" stroke-width="1"/>
<path d="M1 15.500 L4.800 5.500 H19 L15.200 15.500 Z" fill="#ecb754"/>
</svg>
<!-- 3 save -->
<svg class="abs" style="left:98px;top:59px" width="18" height="18" viewBox="0 0 18 18">
<path d="M0 1 H17 V18 H1.500 L0 16.500 Z" fill="#6b3594"/>
<rect x="2.300" y="1.500" width="12.300" height="9.200" fill="#fff"/>
<rect x="2.800" y="12.300" width="10.300" height="5.700" fill="#fff"/>
<rect x="5.900" y="14" width="2.200" height="4" fill="#6b3594"/>
</svg>
<!-- 4 save all -->
<svg class="abs" style="left:128px;top:58px" width="18" height="19" viewBox="0 0 18 19">
<path d="M0 1 H14 L15.500 2.500 V4 H3.500 V17 H2 L0 15 Z" fill="#7a48a0"/>
<path d="M1 2 H13.500 V3 H2.500 V15 H1 Z" fill="#d5c2e4"/>
<path d="M3.300 4 H18 V19 H4.500 L3.300 17.800 Z" fill="#6b3594"/>
<rect x="5.100" y="5" width="11.500" height="6" fill="#fff"/>
<rect x="5.700" y="13.800" width="9.300" height="5.200" fill="#fff"/>
<rect x="7.300" y="16" width="2.600" height="3" fill="#6b3594"/>
</svg>
<!-- separators -->
<div class="abs sep" style="left:154px;top:56px;height:23px;"></div>
<div class="abs sep" style="left:250px;top:56px;height:23px;"></div>
<div class="abs sep" style="left:316px;top:56px;height:23px;"></div>
<div class="abs sep" style="left:352px;top:56px;height:23px;"></div>
<div class="abs sep" style="left:418px;top:56px;height:23px;"></div>
<!-- 5 scissors -->
<svg class="abs" style="left:163px;top:58px" width="20" height="20" viewBox="0 0 20 20" fill="none">
<circle cx="4.500" cy="15" r="3.300" stroke="#a9a9a9" stroke-width="1.300"/>
<circle cx="15" cy="15" r="3.300" stroke="#a9a9a9" stroke-width="1.300"/>
<path d="M3 1 L13 12.500" stroke="#9f9f9f" stroke-width="1.700"/>
<path d="M16.500 1 L6.500 12.500" stroke="#a9a9a9" stroke-width="1.700"/>
</svg>
<!-- 6 copy -->
<svg class="abs" style="left:194px;top:58px" width="18" height="20" viewBox="0 0 18 20">
<path d="M1.500 1.500 H7.500 L10.500 4.500 V12.500 H1.500 Z" fill="#fff" stroke="#bdbdbd"/>
<path d="M3 4.500 H8 M3 7 H7 M3 9.500 H7" stroke="#c4c4c4" stroke-width="1"/>
<path d="M7.500 7 H13.500 L16.500 10 V18.500 H7.500 Z" fill="#fff" stroke="#b3b3b3"/>
<path d="M13.500 7 V10 H16.500" fill="none" stroke="#b3b3b3"/>
<path d="M9.500 10.500 H12.500 M9.500 13 H14.500 M9.500 15.500 H14.500" stroke="#b9b9b9" stroke-width="1"/>
</svg>
<!-- 7 paste -->
<svg class="abs" style="left:224px;top:57px" width="19" height="21" viewBox="0 0 19 21">
<rect x="1" y="3" width="14" height="14.500" fill="#e2e2e2"/>
<rect x="2.500" y="5.500" width="11" height="11" fill="#ececec"/>
<path d="M4 5.500 V3.500 H6.500 Q8 0.800 9.500 3.500 H12 V5.500 Z" fill="#a8a8a8"/>
<path d="M8.500 8.500 H14.500 L17.500 11.500 V19.500 H8.500 Z" fill="#fff" stroke="#aeaeae"/>
<path d="M14.500 8.500 V11.500 H17.500" fill="none" stroke="#aeaeae"/>
</svg>
<!-- 8 undo -->
<svg class="abs" style="left:258px;top:60px" width="21" height="13" viewBox="0 0 21 13">
<defs><linearGradient id="ug" x1="0" y1="0" x2="0" y2="1"><stop offset="0" stop-color="#5f97d2"/><stop offset="1" stop-color="#2763ad"/></linearGradient></defs>
<path d="M1 2.500 L1 12 L9 12 L6.300 9.300 Q10.500 4.800 19.800 8 Q15 -0.500 6.800 1.600 Q4.600 2.400 3.400 4.600 Z" fill="url(#ug)"/>
</svg>
<!-- 9 redo -->
<svg class="abs" style="left:289px;top:60px" width="21" height="13" viewBox="0 0 21 13">
<path d="M20 2.500 L20 12 L12 12 L14.700 9.300 Q10.500 4.800 1.200 8 Q6 -0.500 14.200 1.600 Q16.400 2.400 17.600 4.600 Z" fill="#bdbdbd"/>
</svg>
<!-- 10 Aa -->
<div class="t" style="left:325px;top:60px;font-family:'Liberation Serif',serif;font-style:italic;font-weight:bold;font-size:16px;line-height:20px;color:#4a4a4a;letter-spacing:-0.3px;">Aa</div>
<!-- 11 window check -->
<svg class="abs" style="left:360px;top:59px" width="22" height="20" viewBox="0 0 22 20" fill="none">
<rect x="1.500" y="1.500" width="17.500" height="15" fill="#fff" stroke="#7f8790"/>
<rect x="1" y="1" width="18.500" height="3.500" fill="#2f609f"/>
<path d="M10.500 14.200 L13.500 17.300 L20.300 10.300" stroke="#3f9566" stroke-width="2.200"/>
</svg>
<!-- 12 run dataflow -->
<svg class="abs" style="left:391px;top:59px" width="21" height="18" viewBox="0 0 21 18">
<rect x="0.500" y="1" width="7" height="6.500" fill="#fff" stroke="#6d7580"/><rect x="0" y="0.500" width="8" height="2" fill="#3f6fa8"/><rect x="2" y="4" width="4" height="1.300" fill="#aab0b8"/>
<rect x="11.500" y="2.500" width="7" height="6.500" fill="#fff" stroke="#6d7580"/><rect x="11" y="2" width="8" height="2" fill="#3f6fa8"/>
<rect x="1.500" y="10.500" width="7" height="6.500" fill="#fff" stroke="#6d7580"/><rect x="1" y="10" width="8" height="2" fill="#3f6fa8"/><rect x="3" y="13.500" width="4" height="1.300" fill="#aab0b8"/>
<path d="M9.800 5 L20 10.700 L9.800 16.400 Z" fill="#2cb41b"/>
</svg>
<!-- 13 db -->
<svg class="abs" style="left:428px;top:57px" width="20" height="22" viewBox="0 0 20 22">
<path d="M1 4 V17.500 Q7 21.500 13.300 17.500 V4 Z" fill="#efb54a"/>
<ellipse cx="7.150" cy="4" rx="6.150" ry="2.800" fill="#f6cf82"/>
<path d="M1 8.500 Q7 12 13.300 8.500" stroke="#f7d592" stroke-width="1" fill="none"/>
<path d="M8.700 12 L10.500 13.800 L13.500 10.500" stroke="#3f9566" stroke-width="1.600" fill="none"/>
<rect x="9.500" y="13.500" width="9.500" height="7" fill="#fff" stroke="#4a4f57"/>
<rect x="11.500" y="15.500" width="5.500" height="1.200" fill="#b7bcc4"/><rect x="12.500" y="17.700" width="4.500" height="1.200" fill="#c7ccd4"/>
</svg>
<!-- 14 db run -->
<svg class="abs" style="left:457px;top:57px" width="21" height="21" viewBox="0 0 21 21">
<path d="M1 8 V18.500 Q5.500 21.500 10 18.500 V8 Z" fill="#f3c36d"/>
<ellipse cx="5.500" cy="8" rx="4.500" ry="2" fill="#f9deb0"/>
<path d="M5.800 0.500 V6" stroke="#3a6ea8" stroke-width="1.800" fill="none"/><path d="M2.800 3.300 L5.800 7 L8.800 3.300" stroke="#3a6ea8" stroke-width="1.600" fill="none"/>
<path d="M9.800 8.200 L20 13.800 L9.800 19.400 Z" fill="#2cb41b"/>
</svg>
<!-- 15 help -->
<svg class="abs" style="left:487px;top:58px" width="20" height="20" viewBox="0 0 20 20">
<circle cx="10" cy="10" r="9.300" fill="#2b62a5"/>
<text x="10" y="15.300" text-anchor="middle" font-family="Liberation Sans, sans-serif" font-weight="bold" font-size="15" fill="#fff">?</text>
</svg>
<!-- overflow arrows -->
<svg class="abs" style="left:519px;top:77px" width="6" height="7" viewBox="0 0 6 7"><rect x="0" y="0" width="5.500" height="1.200" fill="#111"/><path d="M0 3 H5.500 L2.750 6.300 Z" fill="#111"/></svg>
<svg class="abs" style="left:1348px;top:71px" width="6" height="7" viewBox="0 0 6 7"><rect x="0" y="0" width="5.500" height="1.200" fill="#111"/><path d="M0 3 H5.500 L2.750 6.300 Z" fill="#111"/></svg>
<svg class="abs" style="left:1331px;top:67px" width="6" height="4" viewBox="0 0 6 4"><path d="M0 0 H5.500 L2.750 3 Z" fill="#111"/></svg>
<!-- toolbox header icons -->
<svg class="abs" style="left:187px;top:111px" width="8" height="5" viewBox="0 0 8 5"><path d="M0 0 H7.400 L3.700 4.200 Z" fill="#1c1c1c"/></svg>
<svg class="abs" style="left:201px;top:107px" width="8" height="10" viewBox="0 0 8 10"><path d="M2.500 5 V0.500 H5.500 V5" fill="none" stroke="#1c1c1c" stroke-width="1"/><rect x="4.500" y="0" width="1.600" height="5" fill="#1c1c1c"/><rect x="0" y="5" width="7.500" height="1.200" fill="#1c1c1c"/><rect x="3.200" y="6" width="1.200" height="3.300" fill="#1c1c1c"/></svg>
<svg class="abs" style="left:215px;top:107px" width="8" height="8" viewBox="0 0 8 8"><path d="M0.700 0.700 L7.300 7.300 M7.300 0.700 L0.700 7.300" stroke="#1c1c1c" stroke-width="2"/></svg>
<!-- doc tab right icons -->
<svg class="abs" style="left:1329px;top:109px" width="8" height="5" viewBox="0 0 8 5"><path d="M0 0 H7.400 L3.700 4.200 Z" fill="#111"/></svg>
<svg class="abs" style="left:1343px;top:106px" width="8" height="8" viewBox="0 0 8 8"><path d="M0.700 0.700 L7.300 7.300 M7.300 0.700 L0.700 7.300" stroke="#111" stroke-width="2"/></svg>
<!-- search magnifier -->
<svg class="abs" style="left:196px;top:132px" width="23" height="23" viewBox="0 0 23 23" fill="none">
<circle cx="9" cy="9" r="7.300" stroke="#dfe1e3" stroke-width="1.600"/>
<path d="M5 6.500 Q6.500 4 9 3.800" stroke="#eceded" stroke-width="1"/>
<path d="M14.500 14.800 L20.800 20.800" stroke="#d9dbde" stroke-width="3.200" stroke-linecap="round"/>
</svg>
<!-- vscroll chevrons -->
<svg class="abs" style="left:214px;top:169px" width="9" height="6" viewBox="0 0 9 6" fill="none"><path d="M0.800 5.200 L4.300 1.400 L7.800 5.200" stroke="#4d4d4d" stroke-width="1.900"/></svg>
<svg class="abs" style="left:214px;top:653px" width="9" height="6" viewBox="0 0 9 6" fill="none"><path d="M0.800 0.800 L4.300 4.600 L7.800 0.800" stroke="#4d4d4d" stroke-width="1.900"/></svg>
<!-- hscroll chevrons -->
<svg class="abs" style="left:236px;top:683px" width="6" height="9" viewBox="0 0 6 9" fill="none"><path d="M5.200 0.800 L1.400 4.300 L5.200 7.800" stroke="#4d4d4d" stroke-width="1.900"/></svg>
<svg class="abs" style="left:1341px;top:683px" width="6" height="9" viewBox="0 0 6 9" fill="none"><path d="M0.800 0.800 L4.600 4.300 L0.800 7.800" stroke="#4d4d4d" stroke-width="1.900"/></svg>
<!-- list item icons -->
<!-- data profile -->
<svg class="abs" style="left:18px;top:331px" width="22" height="20" viewBox="0 0 22 20">
<defs><linearGradient id="dpo" x1="0" y1="0" x2="1" y2="0"><stop offset="0" stop-color="#ee9a2e"/><stop offset="1" stop-color="#f5cb45"/></linearGradient>
<linearGradient id="dpb" x1="0" y1="0" x2="1" y2="0"><stop offset="0" stop-color="#7fb3e3"/><stop offset="0.7" stop-color="#3c78b8"/></linearGradient></defs>
<path d="M0.500 0 V19.500 H21.500" stroke="#d5d8dd" stroke-width="1" fill="none"/>
<path d="M1.500 19.500 L5 6.500 Q5.800 3 6.600 3.200 L7.400 5.500 V19.500 Z" fill="url(#dpb)"/>
<path d="M7.400 19.500 V12.300 Q8.600 11 9.600 14 Q11 17.300 12.600 15.600 Q14 12 15.600 11.500 Q17 12 18 15 L20 19.500 Z" fill="url(#dpo)"/>
</svg>
<!-- data quality rules -->
<svg class="abs" style="left:17px;top:364px" width="24" height="23" viewBox="0 0 24 23">
<rect x="0.500" y="1" width="10" height="10" rx="1.500" fill="#5b8fcb"/><rect x="1.500" y="2" width="8" height="8" rx="1" fill="#7aa9dc"/>
<text x="5.500" y="9" text-anchor="middle" font-family="Liberation Sans, sans-serif" font-weight="bold" font-size="8" fill="#fff">if</text>
<rect x="8.500" y="5.500" width="13.500" height="16.500" fill="#fff" stroke="#7c828b"/>
<rect x="11" y="4" width="9" height="3.500" fill="#f0b73e"/><rect x="13.500" y="2.500" width="4" height="2.500" fill="#f0b73e"/>
<circle cx="15.200" cy="15" r="3.700" fill="#d3222a"/>
<path d="M13.300 15 L14.800 16.500 L17.300 13.600" stroke="#fff" stroke-width="1.300" fill="none"/>
</svg>
<!-- field profile glasses -->
<svg class="abs" style="left:16px;top:401px" width="25" height="17" viewBox="0 0 25 17" fill="none">
<path d="M4.500 8 L11 1.500 M17.500 8 L23.500 1" stroke="#6b7683" stroke-width="1"/>
<circle cx="5.300" cy="11.300" r="4.200" fill="#cfe3f5" stroke="#6f9fd0" stroke-width="1.200"/>
<circle cx="16.800" cy="11.300" r="4.200" fill="#cfe3f5" stroke="#6f9fd0" stroke-width="1.200"/>
<path d="M9.500 10.500 Q11 9 12.600 10.500" stroke="#6f9fd0" stroke-width="1.200"/>
</svg>
<!-- record level log -->
<svg class="abs" style="left:17px;top:433px" width="23" height="23" viewBox="0 0 23 23">
<path d="M9.200 0.300 H17 L21.300 4.600 V21 H9.200 Z" fill="#f2f4f1"/>
<path d="M17 0.300 V4.600 H21.300 Z" fill="#d3c98f"/>
<path d="M11 6.500 H18.500 M10 9.500 H18.500 M10 12.500 H18.500 M11 15.500 H18.500" stroke="#cfcfcb" stroke-width="1"/>
<circle cx="5.300" cy="4.400" r="4.300" fill="#c8161a"/><path d="M3.500 2.600 L7.100 6.200 M7.100 2.600 L3.500 6.200" stroke="#fff" stroke-width="1.500"/>
<circle cx="5.800" cy="16.800" r="4.200" fill="#2c9a3e"/><path d="M3.600 16.800 L5.300 18.700 L8.500 14.600" stroke="#eaffea" stroke-width="1.600" fill="none"/>
</svg>
<!-- doc toolbar -->
<svg class="abs" style="left:240px;top:140px" width="21" height="12" viewBox="0 0 21 13" preserveAspectRatio="none">
<path d="M1 2.500 L1 12 L9 12 L6.300 9.300 Q10.500 4.800 19.800 8 Q15 -0.500 6.800 1.600 Q4.600 2.400 3.400 4.600 Z" fill="url(#ug)"/>
</svg>
<svg class="abs" style="left:268px;top:146px" width="6" height="4" viewBox="0 0 6 4"><path d="M0 0 H5.600 L2.800 3.200 Z" fill="#111"/></svg>
<svg class="abs" style="left:281px;top:140px" width="21" height="12" viewBox="0 0 21 13" preserveAspectRatio="none">
<path d="M20 2.500 L20 12 L12 12 L14.700 9.300 Q10.500 4.800 1.200 8 Q6 -0.500 14.200 1.600 Q16.400 2.400 17.600 4.600 Z" fill="#bdbdbd"/>
</svg>
<svg class="abs" style="left:308px;top:146px" width="6" height="4" viewBox="0 0 6 4"><path d="M0 0 H5.600 L2.800 3.200 Z" fill="#a9a9a9"/></svg>
<div class="abs sep" style="left:318px;top:135px;height:23px;"></div>
<div class="abs sep" style="left:474px;top:135px;height:23px;"></div>
<!-- layout icon -->
<svg class="abs" style="left:327px;top:137px" width="20" height="20" viewBox="0 0 20 20">
<rect x="0.500" y="0.500" width="19" height="19" fill="#fff" stroke="#6f747c"/>
<rect x="0" y="0" width="20" height="2.300" fill="#4a7bb8"/>
<path d="M5.500 2 V19.500" stroke="#6f747c" stroke-width="1"/>
<rect x="7.500" y="3.500" width="5.500" height="7" fill="#fff" stroke="#8a8f96"/><rect x="7" y="3" width="6.500" height="2" fill="#5b8fd0"/><rect x="8.500" y="7" width="3.500" height="1" fill="#b0b5bc"/>
<rect x="12.500" y="11.500" width="5.500" height="7" fill="#fff" stroke="#8a8f96"/><rect x="12" y="11" width="6.500" height="2" fill="#5b8fd0"/><rect x="13.500" y="15" width="3.500" height="1" fill="#b0b5bc"/>
</svg>
<!-- zoom box -->
<div class="abs" style="left:393px;top:138px;width:48px;height:18px;background:#fbfcfd;"></div>
<div class="abs" style="left:429px;top:139px;width:11px;height:16px;background:#f4f6f9;"></div>
<svg class="abs" style="left:431px;top:146px" width="7" height="4" viewBox="0 0 7 4"><path d="M0 0 H6 L3 3.400 Z" fill="#111"/></svg>
<div class="t" style="left:356px;top:140px;color:#111;letter-spacing:0.3px;">Zoom</div>
<div class="t" style="left:394.6px;top:140px;color:#222;font-size:12px;transform:scaleX(0.82);transform-origin:0 0;">100%</div>
<!-- printer -->
<svg class="abs" style="left:448px;top:139px" width="18" height="17" viewBox="0 0 18 17">
<rect x="4.500" y="0.500" width="8.500" height="5" fill="#fff" stroke="#8b9097"/>
<rect x="0.500" y="5" width="17" height="8" rx="1.300" fill="#6d7278"/>
<rect x="3.700" y="5.300" width="10.300" height="2.300" fill="#3c70b2"/>
<rect x="4.500" y="10.500" width="8.500" height="6" fill="#fff" stroke="#8b9097"/>
<path d="M6 12.700 H11.500 M6 14.700 H11.500" stroke="#5b8fd0" stroke-width="1"/>
</svg>
<!-- icon1 -->
<svg class="abs" style="left:483px;top:137px" width="21" height="20" viewBox="0 0 21 20">
<rect x="2.500" y="0.500" width="16" height="19" fill="#fff" stroke="#9a9fa6"/>
<rect x="5.500" y="2" width="10.500" height="6" fill="#fff" stroke="#7b8088"/><rect x="5.500" y="1.500" width="10.500" height="1.300" fill="#5b8fd0"/><rect x="7.500" y="4.300" width="6.500" height="1" fill="#9a9fa6"/>
<rect x="0.500" y="10.500" width="8" height="7" fill="#fff" stroke="#7b8088"/><rect x="0.500" y="10" width="8" height="1.300" fill="#5b8fd0"/><path d="M2.500 13.300 H7 M2.500 15.300 H7" stroke="#8a8f96"/>
<rect x="11.500" y="10.500" width="8" height="7" fill="#fff" stroke="#7b8088"/><rect x="11.500" y="10" width="8" height="1.300" fill="#5b8fd0"/><path d="M13.500 13.300 H18 M13.500 15.300 H18" stroke="#8a8f96"/>
</svg>
<!-- icon2 -->
<svg class="abs" style="left:513px;top:137px" width="20" height="20" viewBox="0 0 20 20">
<rect x="0.500" y="0.500" width="19" height="19" fill="#fff" stroke="#6f747c"/>
<rect x="5" y="1.800" width="10.500" height="2" fill="#4a7bb8"/>
<path d="M10.300 3.500 V10.500 M5 12 V10.500 H15.500 V12" stroke="#4a4f57" stroke-width="1" fill="none"/>
<rect x="0.500" y="11.500" width="8" height="2" fill="#4a7bb8"/><rect x="11.500" y="11.500" width="8" height="2" fill="#4a7bb8"/>
</svg>
<!-- icon3 -->
<svg class="abs" style="left:543px;top:137px" width="20" height="20" viewBox="0 0 20 20">
<rect x="0.500" y="0.500" width="19" height="19" fill="#fff" stroke="#6f747c"/>
<rect x="0" y="0" width="20" height="2.500" fill="#4a7bb8"/>
<path d="M6 5.500 H17.500 M6 8.700 H17.500" stroke="#7b8088" stroke-width="1"/><path d="M6 12 H17.500" stroke="#b4b9c0" stroke-width="1.400"/>
<path d="M2.500 5.500 H4.500 M2.500 8.700 H4.500" stroke="#8a8f96" stroke-width="1.600"/><path d="M2.500 12 H4.500" stroke="#c4c8ce" stroke-width="1.600"/>
<path d="M10.300 14 V18.500 M8 16.300 L10.300 18.700 L12.600 16.300" stroke="#4a7bb8" stroke-width="1.200" fill="none"/>
</svg>
<!-- icon4 -->
<svg class="abs" style="left:573px;top:137px" width="20" height="20" viewBox="0 0 20 20">
<rect x="0.500" y="0.500" width="19" height="19" fill="#fff" stroke="#6f747c"/>
<rect x="0" y="0" width="20" height="2.300" fill="#4a7bb8"/>
<path d="M7.800 2 V19.500" stroke="#9a9fa6" stroke-width="1.400"/>
<rect x="10" y="4" width="7.800" height="7" fill="#f4f5f6" stroke="#5a5f67"/><path d="M12.500 6.500 H16 M12.500 8.500 H16" stroke="#c0c4ca" stroke-width="1"/>
</svg>
<!-- icon5 -->
<svg class="abs" style="left:603px;top:137px" width="20" height="20" viewBox="0 0 20 20">
<rect x="0.500" y="0.500" width="19" height="19" fill="#fff" stroke="#6f747c"/>
<rect x="0" y="0" width="20" height="2.300" fill="#4a7bb8"/>
<path d="M7.800 2 V19.500" stroke="#9a9fa6" stroke-width="1.400"/>
<rect x="10" y="4" width="7.800" height="7" fill="#f4f5f6" stroke="#5a5f67"/><path d="M12.500 6.500 H16 M12.500 8.500 H16" stroke="#c0c4ca" stroke-width="1"/>
<path d="M2 8 H6 M4.200 6 L6.200 8 L4.200 10" stroke="#4a7bb8" stroke-width="1.200" fill="none"/>
</svg>
<!-- icon6 -->
<svg class="abs" style="left:633px;top:137px" width="20" height="20" viewBox="0 0 20 20">
<rect x="0.500" y="0.500" width="19" height="19" fill="#fff" stroke="#6f747c"/>
<rect x="0" y="0" width="20" height="2.300" fill="#4a7bb8"/>
<path d="M8.200 2 V19.500" stroke="#9a9fa6" stroke-width="1.400"/>
<rect x="10" y="4" width="7.800" height="7" fill="#f4f5f6" stroke="#5a5f67"/><path d="M12.500 6.500 H16 M12.500 8.500 H16" stroke="#c0c4ca" stroke-width="1"/>
<path d="M1.500 8 H7 M3 6.300 L1.300 8 L3 9.700 M5.500 6.300 L7.200 8 L5.500 9.700" stroke="#4a7bb8" stroke-width="1.100" fill="none"/>
</svg>
<!-- icon7 -->
<svg class="abs" style="left:662px;top:137px" width="21" height="20" viewBox="0 0 21 20">
<path d="M3.500 3 L17.500 15.500" stroke="#3d73b2" stroke-width="1.800"/>
<path d="M1.500 1 L6.500 2 L2.500 6 Z" fill="#3d73b2"/>
<path d="M20 17.800 L14.500 17.500 L18.800 12.500 Z" fill="#3d73b2"/>
</svg>
<!-- icon8 -->
<svg class="abs" style="left:693px;top:137px" width="20" height="20" viewBox="0 0 20 20">
<rect x="0.500" y="0.500" width="19" height="19" fill="#fff" stroke="#6f747c"/>
<rect x="0" y="0" width="20" height="2.300" fill="#4a7bb8"/>
<text x="2" y="9.500" font-family="Liberation Sans, sans-serif" font-size="6" fill="#9a9fa6">010 01</text>
<text x="2" y="16.500" font-family="Liberation Sans, sans-serif" font-size="6" fill="#9a9fa6">10</text>
<rect x="11.500" y="11.500" width="8" height="8" fill="#fff" stroke="#5a5f67"/>
<path d="M13.200 15.500 L15 17.300 L18.300 13.500" stroke="#3d73b2" stroke-width="1.500" fill="none"/>
</svg>
<!-- node header icons -->
<!-- customers: excel file -->
<svg class="abs" style="left:253px;top:241px" width="17" height="16" viewBox="0 0 17 16">
<path d="M1 0.800 H7.500 L10.300 3.600 V15.200 H1 Z" fill="#fff" stroke="#3f9a68" stroke-width="0.800"/>
<rect x="5.300" y="6.200" width="6" height="9" fill="#1f7a45"/>
<path d="M6.800 8.300 L9.800 13 M9.800 8.300 L6.800 13" stroke="#fff" stroke-width="1.200"/>
<rect x="11.500" y="6.800" width="4.300" height="7.800" fill="#2e8b57"/><rect x="12.600" y="8" width="2.200" height="5.400" fill="#54a878"/>
</svg>
<!-- nonull: if + clipboard -->
<div class="t" style="left:513px;top:362px;font-size:7px;line-height:8px;font-weight:bold;color:#e8f2fb;">if</div>
<svg class="abs" style="left:517px;top:363px" width="11" height="15" viewBox="0 0 11 15">
<rect x="0.800" y="3" width="9" height="11.300" fill="#fff"/>
<path d="M2.500 3.800 V2.500 H4 Q5.300 0.200 6.600 2.500 H8.100 V3.800 Z" fill="#f2cf4a"/>
<circle cx="4.900" cy="8.500" r="2.400" fill="#c9211e"/><path d="M3.800 8.500 L4.700 9.400 L6.200 7.500" stroke="#fbd9d6" stroke-width="0.900" fill="none"/>
</svg>
<!-- customers_updated: table -->
<svg class="abs" style="left:770px;top:200px" width="16" height="14" viewBox="0 0 16 14">
<rect x="0.500" y="0.500" width="15" height="13" fill="#fff" stroke="#7d7a6c"/>
<rect x="0" y="0" width="16" height="2.400" fill="#7d7a6c"/>
<rect x="6" y="2.800" width="7.500" height="10.200" fill="#f2b866"/>
<path d="M1.500 5.500 H5 M1.500 8.200 H5 M1.500 10.800 H5" stroke="#c9c9c9" stroke-width="1"/>
<path d="M5.500 2.500 V13.500" stroke="#d9d4c4" stroke-width="0.800"/>
<rect x="8.300" y="6.800" width="5.200" height="3.400" fill="#fff"/>
<path d="M14.500 6.800 Q11.500 5.500 10 8.300" stroke="#2f6db3" stroke-width="1.500" fill="none"/><path d="M8.800 7 L9.700 9.800 L12 8.300 Z" fill="#2f6db3"/>
</svg>
<!-- log -->
<svg class="abs" style="left:1022px;top:280px" width="16" height="16" viewBox="0 0 16 16">
<path d="M5 1 H11.500 L14.700 4.200 V15.200 H5 Z" fill="#f7f1e3"/>
<path d="M7 5 H12.500 M7 7.500 H13 M7 10 H13 M7 12.500 H12" stroke="#d8d4c6" stroke-width="1"/>
<circle cx="3.300" cy="4.200" r="2.900" fill="#bd1a12"/><path d="M2.200 3.100 L4.400 5.300 M4.400 3.100 L2.200 5.300" stroke="#ffe3df" stroke-width="1"/>
<circle cx="3.500" cy="12.600" r="2.900" fill="#2ea436"/><path d="M2.100 12.600 L3.200 13.800 L5.200 11.400" stroke="#d9ffe0" stroke-width="1" fill="none"/>
</svg>

</body>
</html>
